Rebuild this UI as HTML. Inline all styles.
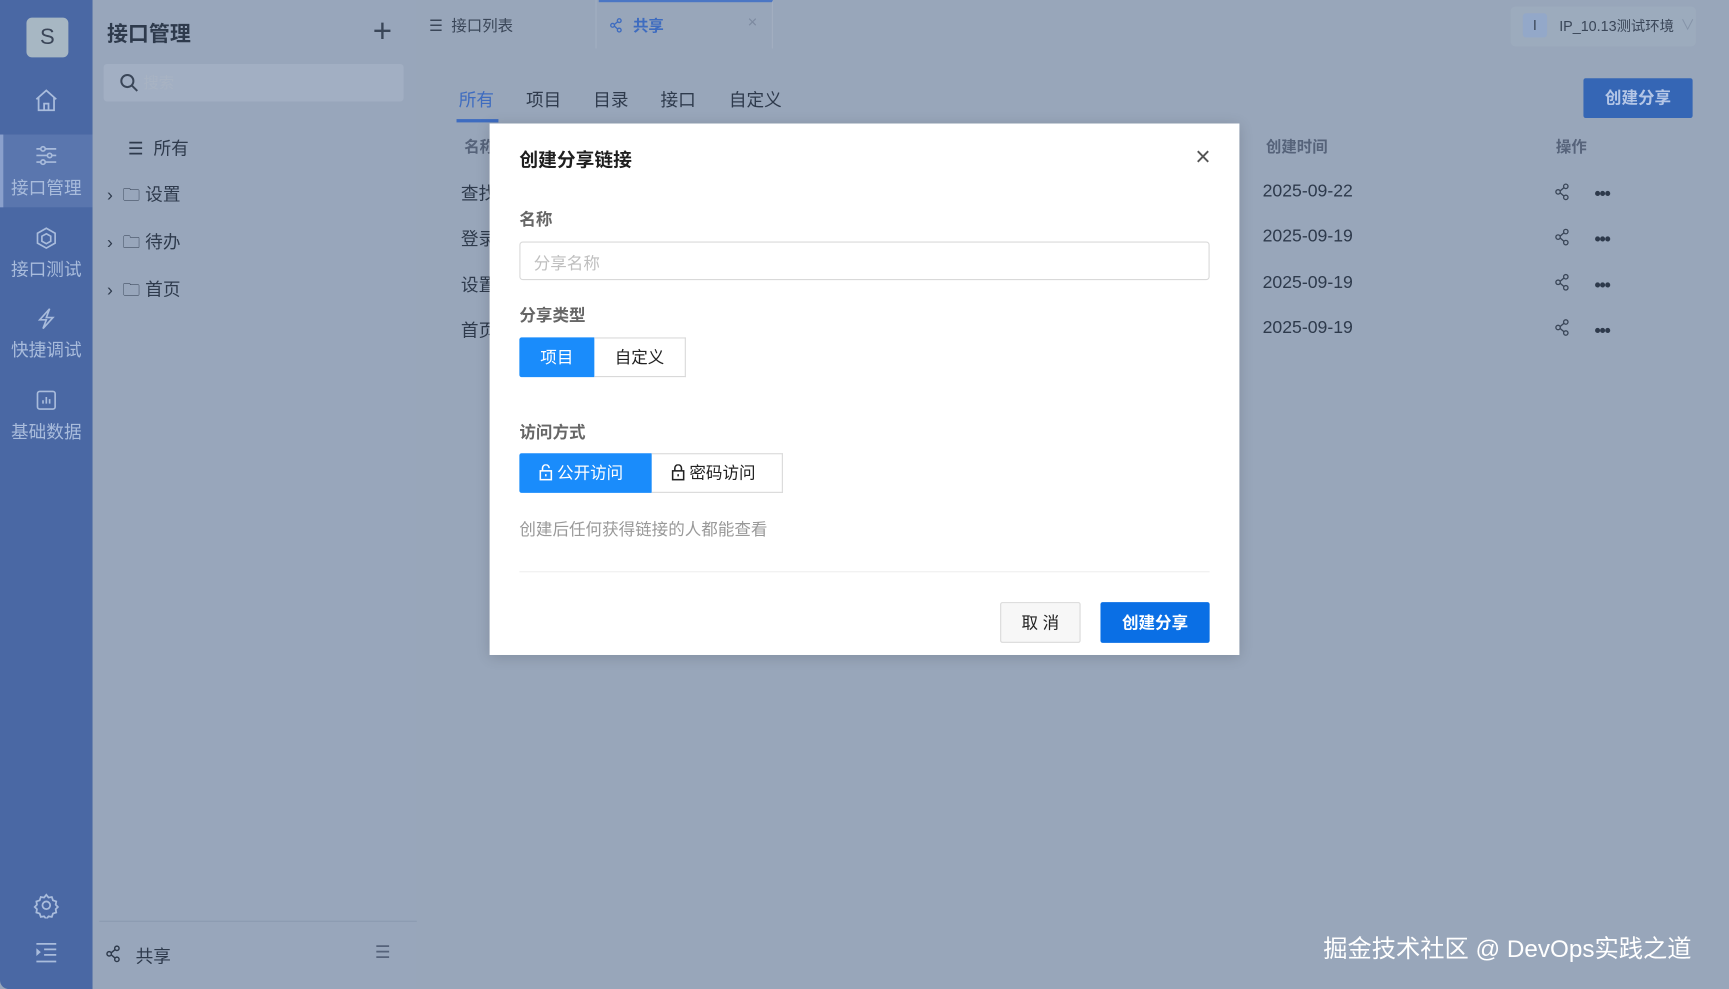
<!DOCTYPE html>
<html><head><meta charset="utf-8">
<style>
*{margin:0;padding:0;box-sizing:border-box}
body{width:1729px;height:989px;overflow:hidden;background:#98a6ba;font-family:"Liberation Sans","Noto Sans CJK SC",sans-serif}
#w{position:absolute;left:0;top:0;width:1568px;height:897px;transform:scale(1.10268);transform-origin:0 0;background:#98a6ba}
.a{position:absolute}
.side{left:0;top:0;width:84px;height:897px;background:#4a68a4;border-bottom-left-radius:8px}
.nav{position:absolute;left:0;width:84px;text-align:center;color:#a9bcdc;font-size:16px}
.mid{left:84px;top:0;width:294px;height:897px;background:#98a6bb}
.t{color:#2e3a4c}
.grey{color:#56637a}
svg{display:block}
</style></head><body><div id="w">
<div class="a side">
 <div class="a" style="left:24px;top:16px;width:38px;height:36px;background:#a7b7c3;border-radius:5px;color:#3b4658;font-size:20px;text-align:center;line-height:36px">S</div>
 <svg class="a" style="left:30px;top:79px" width="24" height="24" viewBox="0 0 24 24" fill="none" stroke="#a9bcdc" stroke-width="1.6"><path d="M3 11 12 3l9 8M5 9v12h14V9M10 21v-6h4v6"/></svg>
 <div class="a" style="left:0;top:122px;width:84px;height:66px;background:#5a76ae;border-left:3px solid #8aa0cc"></div>
 <svg class="a" style="left:31px;top:130px" width="22" height="22" viewBox="0 0 22 22" fill="none" stroke="#a9bcdc" stroke-width="1.5"><path d="M2 5h18M2 11h18M2 17h18"/><circle cx="8" cy="5" r="2" fill="#5a76ae"/><circle cx="14" cy="11" r="2" fill="#5a76ae"/><circle cx="8" cy="17" r="2" fill="#5a76ae"/></svg>
 <div class="nav" style="top:157px">接口管理</div>
 <svg class="a" style="left:31px;top:205px" width="22" height="22" viewBox="0 0 22 22" fill="none" stroke="#a9bcdc" stroke-width="1.5"><path d="M11 2l8 4.5v9L11 20l-8-4.5v-9z"/><path d="M11 7l4 2.2v4.6L11 16l-4-2.2V9.2z"/></svg>
 <div class="nav" style="top:231px">接口测试</div>
 <svg class="a" style="left:31px;top:278px" width="22" height="22" viewBox="0 0 22 22" fill="none" stroke="#a9bcdc" stroke-width="1.5"><path d="M14 2L5 12h6l-3 8 9-10h-6z"/></svg>
 <div class="nav" style="top:304px">快捷调试</div>
 <svg class="a" style="left:31px;top:352px" width="22" height="22" viewBox="0 0 22 22" fill="none" stroke="#a9bcdc" stroke-width="1.5"><rect x="3" y="3" width="16" height="16" rx="2"/><path d="M8 14v-3M11 14V8M14 14v-4"/></svg>
 <div class="nav" style="top:378px">基础数据</div>
 <svg class="a" style="left:30px;top:809px" width="24" height="24" viewBox="0 0 24 24" fill="none" stroke="#a9bcdc" stroke-width="1.6"><circle cx="12" cy="12" r="3.5"/><path d="M12 2.5l2 2.5 3-.5 1 3 3 1-.5 3 2 2-2 2 .5 3-3 1-1 3-3-.5-2 2.5-2-2.5-3 .5-1-3-3-1 .5-3-2-2 2-2-.5-3 3-1 1-3 3 .5z"/></svg>
 <svg class="a" style="left:31px;top:854px" width="22" height="20" viewBox="0 0 22 20" fill="none" stroke="#a9bcdc" stroke-width="1.6"><path d="M2 2h18M9 7h11M9 12h11M2 18h18"/><path d="M2 6l4 3.5L2 13z" fill="#a9bcdc" stroke="none"/></svg>
</div>
<div class="a mid">
 <div class="a t" style="left:13px;top:16px;font-size:19px;font-weight:bold">接口管理</div>
 <div class="a" style="left:254px;top:12px;font-size:30px;color:#3a4658;font-weight:300">+</div>
 <div class="a" style="left:10px;top:58px;width:272px;height:34px;background:#a2afc3;border-radius:3px"></div>
 <svg class="a" style="left:24px;top:66px" width="18" height="18" viewBox="0 0 18 18" fill="none" stroke="#3a4658" stroke-width="1.8"><circle cx="7.5" cy="7.5" r="5.5"/><path d="M11.5 11.5l5 5"/></svg>
 <div class="a" style="left:46px;top:65px;font-size:14px;color:#a8b3c3">搜索</div>
 <div class="a t" style="left:32px;top:121px;font-size:16px">☰&nbsp; 所有</div>
 <div class="a t" style="left:13px;top:163px;font-size:16px">›&nbsp; 🗀 设置</div>
 <div class="a t" style="left:13px;top:206px;font-size:16px">›&nbsp; 🗀 待办</div>
 <div class="a t" style="left:13px;top:249px;font-size:16px">›&nbsp; 🗀 首页</div>
 <div class="a" style="left:6px;top:835px;width:288px;height:1px;background:#8b9ab0"></div>
 <svg class="a" style="left:12px;top:857px" width="14" height="16" viewBox="0 0 14 16" fill="none" stroke="#2e3a4c" stroke-width="1.3"><circle cx="10" cy="3" r="2"/><circle cx="3" cy="8" r="2"/><circle cx="10" cy="13" r="2"/><path d="M5 7l3.5-3M5 9l3.5 3"/></svg>
 <div class="a t" style="left:39px;top:854px;font-size:16px">共享</div>
 <div class="a" style="left:256px;top:854px;font-size:16px;color:#55627a">☰</div>
</div>
<!-- main -->
<div class="a" style="left:378px;top:0;width:163px;height:44px;border-right:1px solid #a2afc1"></div>
<div class="a grey" style="left:389px;top:13px;font-size:14px;color:#3a4658">☰&nbsp; 接口列表</div>
<div class="a" style="left:543px;top:0;width:158px;height:44px;border-top:2px solid #4b76c4;border-right:1px solid #a2afc1"></div>
<svg class="a" style="left:553px;top:16px" width="12" height="14" viewBox="0 0 14 16" fill="none" stroke="#3e6cc0" stroke-width="1.4"><circle cx="10" cy="3" r="2"/><circle cx="3" cy="8" r="2"/><circle cx="10" cy="13" r="2"/><path d="M5 7l3.5-3M5 9l3.5 3"/></svg>
<div class="a" style="left:574px;top:13px;font-size:14px;color:#3e6cc0;font-weight:bold">共享</div>
<div class="a" style="left:678px;top:12px;font-size:15px;color:#7d8aa0">×</div>
<div class="a" style="left:1370px;top:6px;width:168px;height:36px;background:#9cabbd;border-radius:4px"></div>
<div class="a" style="left:1381px;top:12px;width:22px;height:22px;background:#93a8c9;border-radius:3px;text-align:center;color:#3a4658;font-size:13px;line-height:22px">I</div>
<div class="a" style="left:1414px;top:13px;font-size:13px;color:#3a4658">IP_10.13测试环境</div>
<div class="a" style="left:1524px;top:12px;font-size:13px;color:#8593a8">∨</div>
<div class="a" style="left:416px;top:77px;font-size:16px;color:#3e6cc0">所有</div>
<div class="a" style="left:414px;top:108px;width:38px;height:3px;background:#3e6cc0"></div>
<div class="a t" style="left:477px;top:77px;font-size:16px">项目</div>
<div class="a t" style="left:538px;top:77px;font-size:16px">目录</div>
<div class="a t" style="left:599px;top:77px;font-size:16px">接口</div>
<div class="a t" style="left:661px;top:77px;font-size:16px">自定义</div>
<div class="a" style="left:1436px;top:71px;width:99px;height:36px;background:#3566b5;border-radius:2px;color:#b4c6e6;font-size:15px;font-weight:bold;text-align:center;line-height:38px">创建分享</div>
<div class="a grey" style="left:421px;top:123px;font-size:14px;font-weight:bold">名称</div>
<div class="a t" style="left:418px;top:162px;font-size:16px">查找</div>
<div class="a t" style="left:418px;top:203px;font-size:16px">登录</div>
<div class="a t" style="left:418px;top:245px;font-size:16px">设置</div>
<div class="a t" style="left:418px;top:286px;font-size:16px">首页</div>
<div class="a grey" style="left:1148px;top:123px;font-size:14px;font-weight:bold">创建时间</div>
<div class="a grey" style="left:1411px;top:123px;font-size:14px;font-weight:bold">操作</div>
<div class="a t" style="left:1145px;top:165px;font-size:16px">2025-09-22</div>
<div class="a t" style="left:1145px;top:206px;font-size:16px">2025-09-19</div>
<div class="a t" style="left:1145px;top:248px;font-size:16px">2025-09-19</div>
<div class="a t" style="left:1145px;top:289px;font-size:16px">2025-09-19</div>
<div class="a" style="left:1410px;top:164px;line-height:41.3px">
 <svg width="14" height="16" viewBox="0 0 14 16" fill="none" stroke="#3a4658" stroke-width="1.2" style="margin:2px 0 25px"><circle cx="10" cy="3" r="2"/><circle cx="3" cy="8" r="2"/><circle cx="10" cy="13" r="2"/><path d="M5 7l3.5-3M5 9l3.5 3"/></svg>
 <svg width="14" height="16" viewBox="0 0 14 16" fill="none" stroke="#3a4658" stroke-width="1.2" style="margin:0 0 25px"><circle cx="10" cy="3" r="2"/><circle cx="3" cy="8" r="2"/><circle cx="10" cy="13" r="2"/><path d="M5 7l3.5-3M5 9l3.5 3"/></svg>
 <svg width="14" height="16" viewBox="0 0 14 16" fill="none" stroke="#3a4658" stroke-width="1.2" style="margin:0 0 25px"><circle cx="10" cy="3" r="2"/><circle cx="3" cy="8" r="2"/><circle cx="10" cy="13" r="2"/><path d="M5 7l3.5-3M5 9l3.5 3"/></svg>
 <svg width="14" height="16" viewBox="0 0 14 16" fill="none" stroke="#3a4658" stroke-width="1.2"><circle cx="10" cy="3" r="2"/><circle cx="3" cy="8" r="2"/><circle cx="10" cy="13" r="2"/><path d="M5 7l3.5-3M5 9l3.5 3"/></svg>
</div>
<div class="a t" style="left:1446px;top:156px;font-size:16px;font-weight:bold;line-height:41.3px;letter-spacing:-1px">•••<br>•••<br>•••<br>•••</div>
<div class="a" style="left:1200px;top:843px;font-size:22px;color:#fff">掘金技术社区 @ DevOps实践之道</div>
<!-- dialog -->
<div class="a" style="left:444px;top:112px;width:680px;height:482px;background:#fff;box-shadow:0 2px 12px rgba(0,0,0,.15)">
 <div class="a" style="left:27px;top:19px;font-size:17px;font-weight:bold;color:#1f1f1f">创建分享链接</div>
 <div class="a" style="left:640px;top:17px;font-size:24px;color:#555;font-weight:300">×</div>
 <div class="a" style="left:27px;top:76px;font-size:15px;font-weight:bold;color:#666">名称</div>
 <div class="a" style="left:27px;top:107px;width:626px;height:35px;border:1px solid #d9d9d9;border-radius:3px;padding:8px 12px;font-size:15px;color:#bfbfbf">分享名称</div>
 <div class="a" style="left:27px;top:163px;font-size:15px;font-weight:bold;color:#666">分享类型</div>
 <div class="a" style="left:27px;top:194px;width:68px;height:36px;background:#1a8cfb;border-radius:2px 0 0 2px;color:#fff;font-size:15px;text-align:center;line-height:38px">项目</div>
 <div class="a" style="left:95px;top:194px;width:83px;height:36px;border:1px solid #d9d9d9;border-left:0;color:#222;font-size:15px;text-align:center;line-height:36px">自定义</div>
 <div class="a" style="left:27px;top:269px;font-size:15px;font-weight:bold;color:#666">访问方式</div>
 <div class="a" style="left:27px;top:299px;width:120px;height:36px;background:#1a8cfb;border-radius:2px 0 0 2px;color:#fff;font-size:15px;line-height:38px;padding-left:18px">
  <svg style="display:inline-block;vertical-align:-2px" width="12" height="15" viewBox="0 0 12 15" fill="none" stroke="#fff" stroke-width="1.4"><rect x="1" y="6" width="10" height="8"/><path d="M3 6V3.5a3 3 0 0 1 6 0"/><path d="M6 9v2"/></svg> 公开访问</div>
 <div class="a" style="left:147px;top:299px;width:119px;height:36px;border:1px solid #d9d9d9;border-left:0;color:#222;font-size:15px;line-height:36px;padding-left:18px">
  <svg style="display:inline-block;vertical-align:-2px" width="12" height="15" viewBox="0 0 12 15" fill="none" stroke="#222" stroke-width="1.4"><rect x="1" y="6" width="10" height="8"/><path d="M3 6V3.5a3 3 0 0 1 6 0V6"/><path d="M6 9v2"/></svg> 密码访问</div>
 <div class="a" style="left:27px;top:357px;font-size:15px;color:#999">创建后任何获得链接的人都能查看</div>
 <div class="a" style="left:27px;top:406px;width:626px;height:1px;background:#f0f0f0"></div>
 <div class="a" style="left:463px;top:434px;width:73px;height:37px;border:1px solid #d9d9d9;background:#f7f7f7;border-radius:2px;color:#222;font-size:15px;text-align:center;line-height:37px">取 消</div>
 <div class="a" style="left:554px;top:434px;width:99px;height:37px;background:#0a6fe5;border-radius:2px;color:#fff;font-size:15px;font-weight:bold;text-align:center;line-height:39px">创建分享</div>
</div>
</div></body></html>
